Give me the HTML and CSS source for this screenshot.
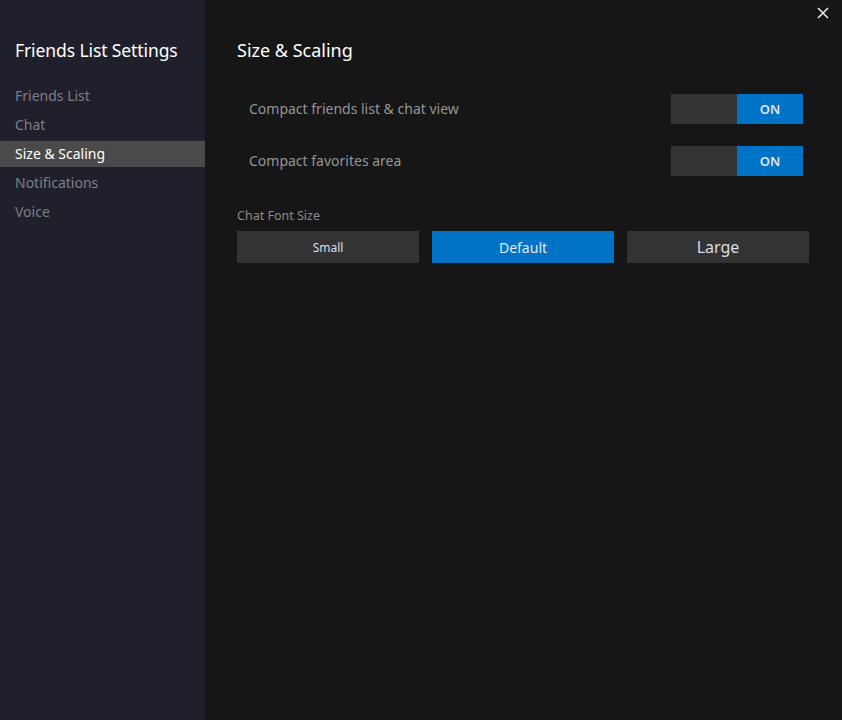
FILE: index.html
```html
<!DOCTYPE html>
<html>
<head>
<meta charset="utf-8">
<link rel="stylesheet" href="styles.css">
</head>
<body>
<div class="app">
  <aside class="sidebar">
    <div class="side-title">Friends List Settings</div>
    <nav class="nav">
      <div class="nav-item">Friends List</div>
      <div class="nav-item">Chat</div>
      <div class="nav-item active">Size &amp; Scaling</div>
      <div class="nav-item">Notifications</div>
      <div class="nav-item">Voice</div>
    </nav>
  </aside>
  <main class="main">
    <button class="close" aria-label="Close">
      <svg width="12" height="12" viewBox="0 0 12 12"><path d="M1 1L11 11M11 1L1 11" stroke="#e6e6e6" stroke-width="1.6"/></svg>
    </button>
    <h1 class="heading">Size &amp; Scaling</h1>
    <div class="setting">
      <span class="label">Compact friends list &amp; chat view</span>
      <div class="toggle"><span class="off"></span><span class="on">ON</span></div>
    </div>
    <div class="setting">
      <span class="label">Compact favorites area</span>
      <div class="toggle"><span class="off"></span><span class="on">ON</span></div>
    </div>
    <div class="section-label">Chat Font Size</div>
    <div class="sizes">
      <div class="size-btn small">Small</div>
      <div class="size-btn default selected">Default</div>
      <div class="size-btn large">Large</div>
    </div>
  </main>
</div>
</body>
</html>
```
FILE: styles.css
```css
html, body {
  margin: 0;
  padding: 0;
  height: 100%;
  background: #161616;
  font-family: "Noto Sans", "Open Sans", sans-serif;
}
.app {
  display: flex;
  height: 720px;
}
.sidebar {
  width: 205px;
  flex: none;
  background: #1f202b;
  padding-top: 37px;
  box-sizing: border-box;
}
.side-title {
  color: #ffffff;
  font-size: 17.5px;
  letter-spacing: -0.1px;
  line-height: 26px;
  padding-left: 15px;
  margin-bottom: 20px;
}
.nav {
  display: flex;
  flex-direction: column;
  gap: 3px;
}
.nav-item {
  height: 26px;
  line-height: 26px;
  padding-left: 15px;
  font-size: 14px;
  color: #7d7f86;
}
.nav-item.active {
  background: #4a4a4a;
  color: #ffffff;
}
.main {
  flex: 1;
  position: relative;
  padding: 37px 0 0 32px;
  box-sizing: border-box;
}
.close {
  position: absolute;
  top: 6px;
  right: 12px;
  background: none;
  border: 0;
  padding: 0;
  width: 14px;
  height: 14px;
  display: flex;
  align-items: center;
  justify-content: center;
}
.heading {
  margin: 0 0 31px 0;
  font-weight: normal;
  font-size: 18px;
  line-height: 26px;
  color: #ffffff;
}
.setting {
  display: flex;
  align-items: center;
  justify-content: space-between;
  padding-left: 12px;
  width: 554px;
  margin-bottom: 22px;
}
.label {
  color: #959595;
  font-size: 14px;
  line-height: 18px;
  margin-top: -1px;
}
.toggle {
  display: flex;
  width: 132px;
  height: 30px;
}
.toggle .off {
  flex: 1;
  background: #333333;
}
.toggle .on {
  flex: 1;
  background: #0073c7;
  color: #dde6f0;
  font-size: 13px;
  font-weight: 600;
  display: flex;
  align-items: center;
  justify-content: center;
}
.section-label {
  margin-top: 31px;
  color: #8b8b8b;
  font-size: 12.5px;
  line-height: 18px;
  margin-bottom: 6px;
}
.sizes {
  display: flex;
  gap: 13px;
}
.size-btn {
  width: 182px;
  height: 32px;
  background: #333333;
  color: #dcdcec;
  display: flex;
  align-items: center;
  justify-content: center;
}
.size-btn.small { font-size: 12px; }
.size-btn.default { font-size: 14px; }
.size-btn.large { font-size: 16px; }
.size-btn.selected {
  background: #0073c7;
  color: #e3e9f5;
}
```
